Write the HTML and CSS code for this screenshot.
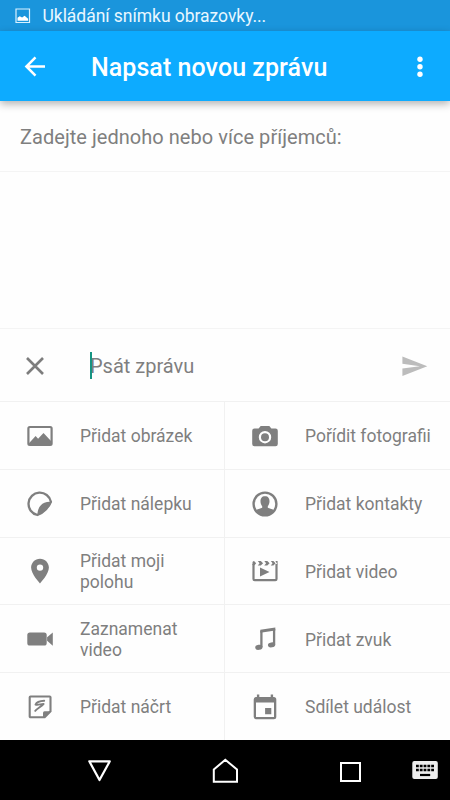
FILE: index.html
```html
<!DOCTYPE html>
<html lang="cs">
<head>
<meta charset="utf-8">
<title>Napsat novou zprávu</title>
<link rel="stylesheet" href="styles.css">
</head>
<body>
<div class="screen">
  <div class="status">
    <svg class="status-icon" viewBox="0 0 16 16"><path d="M1 1h13.500v13.500H1z" fill="none" stroke="#d9f1ff" stroke-width="1.200"/><path d="M2.500 12.800V9.800l2.200-1.600 2.400 1.300 2.500-1.800 3.500 3v2.100z" fill="#fff"/></svg>
    <span>Ukládání snímku obrazovky...</span>
  </div>
  <header class="appbar">
    <svg class="back" viewBox="0 0 30 30"><path d="M25 14.500H7M15.500 5.300L6.400 14.500l9.100 9.200" fill="none" stroke="#fff" stroke-width="2.500"/></svg>
    <h1>Napsat novou zprávu</h1>
    <svg class="more" viewBox="0 0 30 30"><g fill="#fff"><circle cx="15" cy="7.200" r="2.700"/><circle cx="15" cy="14.700" r="2.700"/><circle cx="15" cy="22.200" r="2.700"/></g></svg>
  </header>
  <div class="recipients">Zadejte jednoho nebo více příjemců:</div>
  <div class="thread"></div>
  <div class="compose">
    <svg class="close" viewBox="0 0 30 30"><path d="M7 7l16 16M23 7L7 23" stroke="#7d7d7d" stroke-width="2.600"/></svg>
    <div class="input"><i class="caret"></i>Psát zprávu</div>
    <svg class="send" viewBox="0 0 30 30"><path d="M2.400 5.500L27.300 15.200 2.400 25v-7.400l17.400-2.400-17.400-2.400z" fill="#bcbcbc"/></svg>
  </div>
  <div class="grid">
    <div class="cell">
      <svg viewBox="0 0 30 30"><rect x="3.400" y="6" width="23.200" height="18" rx="1.400" fill="none" stroke="#7f7f7f" stroke-width="2.200"/><path d="M4 22.200l6.600-7.200 2.500 2.700 5.400-5.700 8 8.500V24H4z" fill="#7f7f7f"/></svg>
      <span>Přidat obrázek</span>
    </div>
    <div class="cell">
      <svg viewBox="0 0 30 30"><path fill-rule="evenodd" d="M10.700 5h8.600l2.100 2.500h4.100a2.300 2.300 0 0 1 2.300 2.300v13.100a2.300 2.300 0 0 1-2.300 2.300h-21a2.300 2.300 0 0 1-2.300-2.300V9.800a2.300 2.300 0 0 1 2.300-2.300h4.100zM15 10a6.200 6.200 0 1 0 0 12.400A6.200 6.200 0 1 0 15 10z" fill="#7f7f7f"/><circle cx="15" cy="16.200" r="4" fill="#7f7f7f"/></svg>
      <span>Pořídit fotografii</span>
    </div>
    <div class="cell">
      <svg viewBox="0 0 30 30"><path d="M12.400 26A11.300 11.300 0 1 1 25.900 12.700C24.500 17.500 17.500 24.500 12.400 26z" fill="none" stroke="#7f7f7f" stroke-width="2.300"/><path d="M26.900 12.800c-5-.6-9 .9-11 3.400-2.400 2.200-3.500 6.300-3.600 10.600C18 24.500 25 18 26.900 12.800z" fill="#7f7f7f"/></svg>
      <span>Přidat nálepku</span>
    </div>
    <div class="cell">
      <svg viewBox="0 0 30 30"><circle cx="15" cy="15" r="11.400" fill="none" stroke="#7f7f7f" stroke-width="2.400"/><path d="M15 7.200c3.200 0 4.500 2.100 4.500 5 0 2-.7 3.900-1.700 5v1.500l6.500 2.400C22 24.500 19 26 15 26s-7-1.500-9.300-4.900l6.500-2.400v-1.500c-1-1.100-1.700-3-1.700-5 0-2.900 1.300-5 4.500-5z" fill="#7f7f7f"/></svg>
      <span>Přidat kontakty</span>
    </div>
    <div class="cell">
      <svg viewBox="0 0 30 30"><path fill-rule="evenodd" d="M15 2.700c5 0 8.900 3.900 8.900 8.900C23.900 18.200 15 27.400 15 27.400S6.100 18.200 6.100 11.600c0-5 3.900-8.900 8.900-8.900zm0 5.700a3.200 3.200 0 1 0 0 6.400 3.200 3.200 0 1 0 0-6.400z" fill="#7f7f7f"/></svg>
      <span>Přidat moji polohu</span>
    </div>
    <div class="cell">
      <svg viewBox="0 0 30 30"><path d="M3.500 8v15a1.200 1.200 0 0 0 1.200 1.200h20.600a1.200 1.200 0 0 0 1.200-1.200V8" fill="none" stroke="#7f7f7f" stroke-width="2.200"/><path d="M2.500 9V6.500a1.500 1.500 0 0 1 1.500-1.500l2.200 2.300L4.500 9.200zM7.800 5h3l2.300 2.300-2.300 2.300h-3l1.800-2.300zM14.300 5h3l2.300 2.300-2.300 2.300h-3l1.800-2.300zM20.800 5h2.600l2.200 2.300-2.200 2.300h-2.600l1.800-2.300zM25.400 5h2.200v3.700zM10 11.600l9.500 4.500L10 20.600z" fill="#7f7f7f"/></svg>
      <span>Přidat video</span>
    </div>
    <div class="cell">
      <svg viewBox="0 0 30 30"><path d="M4.900 8.500h14.200a2.600 2.600 0 0 1 2.600 2.600v7.800a2.600 2.600 0 0 1-2.600 2.600H4.900a2.600 2.600 0 0 1-2.600-2.600v-7.800a2.600 2.600 0 0 1 2.600-2.600zM27.800 8.500v13.200l-5.700-5v-3.400z" fill="#7f7f7f"/></svg>
      <span>Zaznamenat video</span>
    </div>
    <div class="cell">
      <svg viewBox="0 0 30 30"><path d="M11.400 23V6.700M24.100 5v15.500" fill="none" stroke="#7f7f7f" stroke-width="2.300"/><path d="M10.300 5.800L25.300 3.500v2.900L10.300 8.700z" fill="#7f7f7f"/><ellipse cx="8.900" cy="23.300" rx="3.700" ry="2.500" fill="#7f7f7f" transform="rotate(-10 8.900 23.300)"/><ellipse cx="21.600" cy="20.900" rx="3.700" ry="2.500" fill="#7f7f7f" transform="rotate(-10 21.600 20.900)"/></svg>
      <span>Přidat zvuk</span>
    </div>
    <div class="cell">
      <svg viewBox="0 0 30 30"><path d="M5.500 4.500h19.200a.8.800 0 0 1 .8.800v14l-5.800 5.900H5.500a.8.800 0 0 1-.8-.8V5.300a.8.800 0 0 1 .8-.8z" fill="none" stroke="#7f7f7f" stroke-width="2.100"/><path d="M18 26v-5.200a1.500 1.500 0 0 1 1.500-1.500h6.800z" fill="#7f7f7f"/><path d="M19.200 8.800c-4 .2-7.800 1.800-8.700 3.800 2.500.9 5.600-.8 8.100-.7-2 2.700-6 4.300-8.400 7" fill="none" stroke="#7f7f7f" stroke-width="1.900" stroke-linejoin="round" stroke-linecap="round"/></svg>
      <span>Přidat náčrt</span>
    </div>
    <div class="cell">
      <svg viewBox="0 0 30 30"><path fill-rule="evenodd" d="M6.900 2.500h2.400v2.400h11.400V2.500h2.400v2.400h.7a2.500 2.500 0 0 1 2.500 2.500v17.300a2.500 2.500 0 0 1-2.500 2.500H6.200a2.500 2.500 0 0 1-2.500-2.500V7.400a2.500 2.500 0 0 1 2.500-2.500h.7zM6 10.500V25h18V10.500zM15.100 16h6.200v6.200h-6.200z" fill="#7f7f7f"/></svg>
      <span>Sdílet událost</span>
    </div>
  </div>
  <nav class="nav">
    <svg viewBox="0 0 30 30"><path d="M5.300 6.300h20.500L15.500 25z" fill="none" stroke="#fff" stroke-width="2.200" stroke-linejoin="round"/></svg>
    <svg viewBox="0 0 30 30"><path d="M3.800 14.500L15.300 4.800l11.700 9.700v12.200H3.800z" fill="none" stroke="#fff" stroke-width="2"/></svg>
    <svg viewBox="0 0 30 30"><rect x="5" y="8" width="19" height="18" fill="none" stroke="#fff" stroke-width="2"/></svg>
    <svg class="kbd" viewBox="0 0 30 30"><rect x="2.300" y="6" width="25.500" height="18" rx="2" fill="#eee"/><path d="M6 11h18M6 15h18" stroke="#000" stroke-width="2.600" stroke-dasharray="2.800 1"/><path d="M10 20h10.200" stroke="#000" stroke-width="2.200"/></svg>
  </nav>
</div>
</body>
</html>
```
FILE: styles.css
```css
* { box-sizing: border-box; }
body { margin: 0; background: #fefefe; font-family: Roboto, sans-serif; color: #7f7f7f; }
svg { display: block; flex: none; width: 30px; height: 30px; }
.screen { width: 450px; height: 800px; display: flex; flex-direction: column; overflow: hidden; }
.status { height: 31px; flex: none; background: #1a95dc; color: #e8f7ff; display: flex; align-items: center; padding-left: 14.500px; gap: 12px; font-size: 17.500px; letter-spacing: -.04px; }
.status-icon { width: 16px; height: 16px; }
.appbar { height: 70px; flex: none; background: #0dabff; display: flex; align-items: center; padding: 1px 15px 0 20px; position: relative; box-shadow: 0 3px 8px rgba(0,0,0,.3); }
.appbar h1 { flex: 1; margin: 3px 0 0 41px; font-size: 25px; line-height: 30px; font-weight: 500; letter-spacing: .06px; color: #fff; }
.recipients { height: 71px; flex: none; border-bottom: 1px solid #f4f4f4; padding: 24px 20px 0; font-size: 20px; line-height: 24px; letter-spacing: .04px; }
.thread { flex: 1; }
.compose { height: 73px; flex: none; border-top: 1px solid #f4f4f4; display: flex; align-items: center; padding: 2px 20px 0; }
.input { flex: 1; margin-left: 40px; font-size: 20px; position: relative; }
.caret { position: absolute; left: 0; top: -2px; width: 2px; height: 27px; background: #159482; }
.grid { height: 339px; flex: none; display: grid; grid-template-columns: 224px 226px; grid-template-rows: repeat(5, 1fr); }
.cell { border-top: 1px solid #f1f1f1; display: flex; align-items: center; padding: 1px 28px 0 25px; gap: 25px; font-size: 17.500px; line-height: 20.500px; }
.cell:nth-child(even) { border-left: 1px solid #f1f1f1; padding: 1px 12px 0 25px; }
.cell span { padding-top: 1px; }
.nav { height: 60px; flex: none; background: #000; display: flex; align-items: center; padding: 0 10px 0 84px; }
.nav svg + svg { margin-left: 96px; }
.nav svg.kbd { margin-left: auto; }
```
